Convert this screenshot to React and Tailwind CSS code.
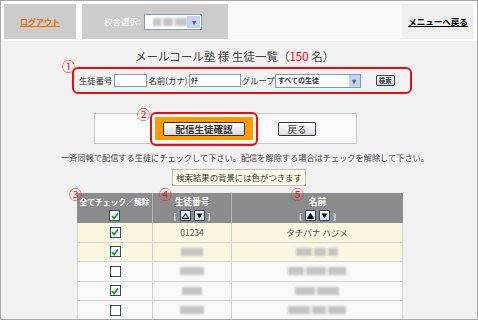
import React from "react";

const rows = [
  { checked: true, id: "01234", name: "タチバナ ハジメ", hl: true },
  { checked: true, blurId: [22], blurName: [16, 12, 10], hl: true },
  { checked: false, blurId: [24], blurName: [16, 20, 18] },
  { checked: true, blurId: [20], blurName: [20, 22] },
  { checked: false, blurId: [24], blurName: [22, 14, 18] },
];

const Check = ({ on }) => (
  <span className="inline-flex w-[11px] h-[11px] items-center justify-center border border-[#1f4f7a] bg-white">
    {on && (
      <svg width="8" height="8" viewBox="0 0 8 8">
        <path d="M1 4 L3 6.5 L7 1.5" stroke="#1a9a1a" strokeWidth="1.8" fill="none" />
      </svg>
    )}
  </span>
);

const SortBtn = ({ up, outline }) => (
  <span className="inline-flex w-[11px] h-[11px] items-center justify-center border border-[#23476b] bg-gradient-to-b from-white to-[#cfd8e4] rounded-[1px]">
    <svg width="7" height="6" viewBox="0 0 7 6">
      {up ? (
        <path d="M3.5 0.5 L6.5 5.5 L0.5 5.5 Z" fill={outline ? "none" : "#000"} stroke="#000" strokeWidth="1" />
      ) : (
        <path d="M0.5 0.5 L6.5 0.5 L3.5 5.5 Z" fill="#000" />
      )}
    </svg>
  </span>
);

const Blur = ({ widths }) => (
  <span className="inline-flex gap-[2px] blur-[1px]">
    {widths.map((w, i) => (
      <span key={i} className="h-[8px] bg-[#c4c4c4]" style={{ width: w }} />
    ))}
  </span>
);

const Num = ({ children, className }) => (
  <span className={"absolute text-[13px] leading-none text-[#ee1111] " + className}>{children}</span>
);

export default function App() {
  return (
    <div className="relative w-[478px] h-[320px] overflow-hidden border border-[#a8a8a8] bg-[#f1f1f1] text-[#333] whitespace-nowrap font-['Noto_Sans_CJK_JP',sans-serif]">
      {/* top bar */}
      <div className="flex h-[40px] bg-white pt-[3px] pl-[3px] pr-[3px] border-b-2 border-white">
        <div className="w-[72px] bg-[#cccccc] flex items-center justify-center">
          <span className="text-[8px] font-bold text-[#f06a00] underline">ログアウト</span>
        </div>
        <div className="w-[146px] ml-[6px] bg-[#cccccc] flex items-center pl-[22px] gap-[4px]">
          <span className="text-[8.5px] text-white">校舎選択:</span>
          <span className="flex w-[58px] h-[16px] border border-[#7f9db9] bg-white items-center pl-[8px] pr-[1px]">
            <Blur widths={[8, 10, 12]} />
            <span className="ml-auto w-[13px] h-[12px] bg-[#c3d3f4] flex items-center justify-center text-[8px] text-[#4d6185]">▾</span>
          </span>
        </div>
        <div className="w-[174px] bg-[#f8f8f8]" />
        <div className="w-[72px] bg-[#efefef] flex items-center justify-center">
          <span className="text-[8.5px] font-bold text-black underline">メニューへ戻る</span>
        </div>
      </div>

      {/* title */}
      <div className="mt-[7px] ml-[134px] text-[11.5px] leading-[16px] text-[#444]">
        メールコール塾 様 生徒一覧（<span className="text-[#e00]">150</span> 名）
      </div>

      {/* search form */}
      <div className="relative mt-[3px] ml-[71px] w-[340px] h-[27px] border-2 border-[#e21010] rounded-[6px] flex items-center pl-[5px] text-[8.4px] text-[#333]">
        <span>生徒番号</span>
        <span className="w-[33px] h-[13px] border border-[#7f9db9] bg-white ml-[1px]" />
        <span className="ml-[2px]">名前(カナ)</span>
        <span className="w-[52px] h-[13px] border border-[#7f9db9] bg-white ml-[1px] text-[7px] leading-[11px] pl-[1px] font-bold">ﾀﾁ</span>
        <span className="ml-[1px]">グループ</span>
        <span className="flex w-[86px] h-[14px] border border-[#7f9db9] bg-white items-center pl-[2px] text-[7px] font-bold">
          すべての生徒
          <span className="ml-auto w-[11px] h-[12px] bg-[#c3d3f4] flex items-center justify-center text-[8px] text-[#4d6185]">▾</span>
        </span>
        <span className="ml-[15px] h-[11px] px-[2px] border border-[#23476b] rounded-[2px] bg-gradient-to-b from-white to-[#d5dbe8] text-[6.5px] leading-[9px] font-bold">検索</span>
        <Num className="-left-[12px] -top-[10px]">①</Num>
      </div>

      {/* confirm box */}
      <div className="relative mt-[19px] ml-[93px] w-[263px] h-[31px] border border-[#c8c8c8] bg-[#f9f9f9] flex items-center">
        <div className="ml-[55px] w-[108px] h-[34px] border-2 border-[#e21010] rounded-[6px] flex items-center justify-center">
          <div className="w-[98px] h-[23px] bg-[#ff9a00] flex items-center justify-center">
            <span className="w-[82px] h-[14px] border border-[#333] rounded-[2px] bg-gradient-to-b from-white to-[#dcdcdc] text-[9.5px] leading-[12px] font-bold text-center">配信生徒確認</span>
          </div>
        </div>
        <span className="ml-[20px] w-[38px] h-[14px] border border-[#333] rounded-[2px] bg-gradient-to-b from-white to-[#dcdcdc] text-[9.5px] leading-[12px] text-center">戻る</span>
        <Num className="left-[42px] -top-[7px]">②</Num>
      </div>

      <div className="mt-[7px] ml-[60px] text-[8.2px] leading-[12px] text-[#444]">
        一斉同報で配信する生徒にチェックして下さい。配信を解除する場合はチェックを解除して下さい。
      </div>

      <div className="mt-[6px] ml-[171px] w-[134px] h-[17px] border border-[#bdbdbd] bg-[#fdfde8] text-[8.4px] leading-[15px] text-center text-[#333]">
        検索結果の背景には色がつきます
      </div>

      {/* table */}
      <div className="relative mt-[7px] ml-[76px] w-[326px]">
        <Num className="-left-[8px] -top-[6px]">③</Num>
        <Num className="left-[82px] -top-[6px]">④</Num>
        <Num className="left-[214px] -top-[6px]">⑤</Num>
        <div className="grid grid-cols-[76px_79px_171px] h-[30px] bg-[#8c8c8c] text-white text-[7.8px] font-bold leading-[10px]">
          <div className="flex flex-col items-center pt-[4px] gap-[3px] border-r border-[#b5b5b5]">
            <span>全てチェック／解除</span>
            <Check on />
          </div>
          <div className="flex flex-col items-center pt-[3px] gap-[2px] border-r border-[#b5b5b5]">
            <span className="text-[8.7px] leading-[12px]">生徒番号</span>
            <span className="flex items-center gap-[3px]">[ <SortBtn up outline /> <SortBtn /> ]</span>
          </div>
          <div className="flex flex-col items-center pt-[3px] gap-[2px]">
            <span className="text-[8.7px] leading-[12px]">名前</span>
            <span className="flex items-center gap-[3px]">[ <SortBtn up /> <SortBtn /> ]</span>
          </div>
        </div>
        {rows.map((r, i) => (
          <div
            key={i}
            className={
              "grid grid-cols-[76px_79px_171px] h-[19.5px] border-b border-[#d3d3d3] text-[8.5px] text-[#555] " +
              (r.hl ? "bg-[#f8f8e1]" : "bg-[#f9f9f9]")
            }
          >
            <div className="flex items-center justify-center border-r border-l border-[#d3d3d3]">
              <Check on={r.checked} />
            </div>
            <div className="flex items-center justify-center border-r border-[#d3d3d3]">
              {r.id ? r.id : <Blur widths={r.blurId} />}
            </div>
            <div className="flex items-center justify-center border-r border-[#d3d3d3]">
              {r.name ? r.name : <Blur widths={r.blurName} />}
            </div>
          </div>
        ))}
      </div>
    </div>
  );
}
